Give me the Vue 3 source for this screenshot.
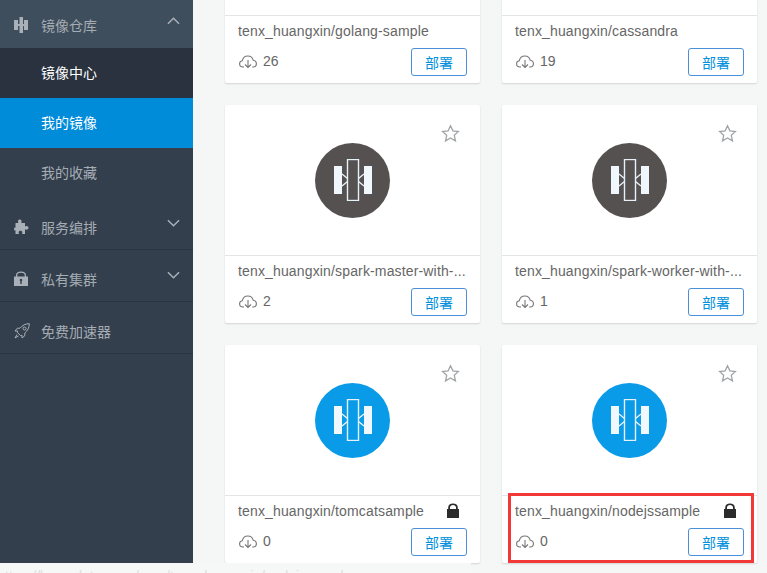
<template>
  <div class="page">
    <aside class="sidebar">
      <div class="menu-head">
        <svg class="menu-icon" viewBox="0 0 16 16"><path d="M0 3h4v4h1.500V0H9v7h1V3h4v10h-4V9H9v7H5.500V9H4v4H0z" /></svg>
        <span>镜像仓库</span>
        <svg class="chevron" viewBox="0 0 14 8"><path d="M1 7l6-6 6 6" /></svg>
      </div>
      <div class="sub-item current">镜像中心</div>
      <div class="sub-item active">我的镜像</div>
      <div class="sub-item">我的收藏</div>

      <div v-for="item in menus" :key="item.name" class="menu-item">
        <svg v-if="item.icon === 'puzzle'" class="menu-icon" viewBox="0 0 16 16"><path d="M4 2.500C4 1.200 5 .6 5.800.6S7.600 1.200 7.600 2.500c0 .6-.3 1-.3 1.500H11v3.300c.5 0 .9-.4 1.600-.4 1.200 0 1.900 1 1.900 1.900s-.7 1.900-1.900 1.900c-.7 0-1.100-.4-1.600-.4V15H8c0-.6.4-1 .4-1.600 0-1-.9-1.600-1.900-1.600s-1.900.6-1.900 1.600c0 .6.4 1 .4 1.600H1.500v-3.700c-.6 0-.8.300-1.200.300L0 8.500c.3 0 .7.300 1.500.300V4h2.800c0-.5-.3-.9-.3-1.500z" /></svg>
        <svg v-else-if="item.icon === 'lock'" class="menu-icon" viewBox="0 0 16 16"><path fill-rule="evenodd" d="M0 5.500h2V4C2 2 4 .5 7 .5S12 2 12 4v1.500h2V15H0zM3.300 5.500h7.400V4c0-1.400-1.600-2.300-3.700-2.300S3.300 2.600 3.300 4zM7 7.800a1.300 1.300 0 0 0-.7 2.400V13h1.400v-2.800A1.300 1.300 0 0 0 7 7.800z" /></svg>
        <svg v-else class="menu-icon rocket" viewBox="0 0 16 16"><path d="M15.300.7C11.500.7 8.300 2.300 6 5.200H3.300L1 8h2.700L3.300 9.400l3.300 3.300 1.400-.4v2.700l2.800-2.300V10c2.900-2.300 4.500-5.500 4.500-9.300z" /><circle cx="10.500" cy="5.500" r="1.500" /><path d="M3 11.500L1 15l3.500-2" /></svg>
        <span>{{ item.name }}</span>
        <svg v-if="item.arrow" class="chevron" viewBox="0 0 14 8"><path d="M1 1l6 6 6-6" /></svg>
      </div>
    </aside>

    <main class="content">
      <div class="grid">
        <div v-for="card in cards" :key="card.name" class="card">
          <div class="card-top">
            <svg class="star" viewBox="0 0 20 20"><path d="M10 1.800l2.500 5.400 5.800.7-4.300 4 1.200 5.800-5.200-3-5.200 3 1.200-5.800-4.300-4 5.800-.7z" /></svg>
            <div class="logo" :class="card.color">
              <svg viewBox="-21 -21 42 42" width="42" height="42">
                <path class="logo-fill" d="M-19-14h8v28h-8zM11-14h8v28h-8z" />
                <rect class="logo-line" x="-5.500" y="-20.500" width="11" height="41" />
                <path class="logo-line" d="M-11-6l5.500 4.500M-11 6l5.500-4.500M11-6L5.500-1.500M11 6L5.500 1.500" />
              </svg>
            </div>
          </div>
          <div class="name-row">
            <span class="name">{{ card.name }}</span>
            <svg v-if="card.locked" class="lock" viewBox="0 0 14 15"><path fill-rule="evenodd" d="M1 6h1.200V4.500C2.200 2 4.200.5 7 .5s4.800 1.500 4.800 4V6H13v9H1zM4 6h6V4.500C10 3 8.700 2.100 7 2.100S4 3 4 4.500z" /></svg>
          </div>
          <div class="action-row">
            <div class="pulls">
              <svg class="cloud" viewBox="0 0 18 13"><path d="M5 12H4C2 12 .6 10.600.6 8.800.6 7.200 1.800 5.900 3.300 5.700 3.800 3 6 1 8.800 1c2.700 0 4.900 1.800 5.400 4.300 1.800.2 3.200 1.700 3.200 3.500 0 1.800-1.500 3.200-3.300 3.200h-.9" /><path d="M9 5v7.500M6 9.500l3 3 3-3" /></svg>
              <span class="count">{{ card.count }}</span>
            </div>
            <button class="deploy" type="button">部署</button>
          </div>
          <div v-if="card.marked" class="mark"></div>
        </div>
      </div>
    </main>

    <div class="strip"><span>tten://hosp.dotenx.cn/user/tenx_huangxin/nodejssample</span></div>
  </div>
</template>

<script setup>
const menus = [
  { name: '服务编排', icon: 'puzzle', arrow: true },
  { name: '私有集群', icon: 'lock', arrow: true },
  { name: '免费加速器', icon: 'rocket', arrow: false },
]

const cards = [
  { name: 'tenx_huangxin/golang-sample', count: 26, color: 'blue' },
  { name: 'tenx_huangxin/cassandra', count: 19, color: 'blue' },
  { name: 'tenx_huangxin/spark-master-with-...', count: 2, color: 'dark' },
  { name: 'tenx_huangxin/spark-worker-with-...', count: 1, color: 'dark' },
  { name: 'tenx_huangxin/tomcatsample', count: 0, color: 'blue', locked: true },
  { name: 'tenx_huangxin/nodejssample', count: 0, color: 'blue', locked: true, marked: true },
]
</script>

<style>
html,
body {
  margin: 0;
  overflow: hidden;
}
</style>

<style scoped>
.page {
  position: relative;
  display: flex;
  width: 767px;
  height: 573px;
  overflow: hidden;
  background: #f5f6f6;
  font-family: "Liberation Sans", "Noto Sans CJK SC", sans-serif;
}

.sidebar {
  flex: none;
  width: 193px;
  background: #333f4d;
  color: #a5acb3;
  font-size: 14px;
}

.menu-head {
  display: flex;
  align-items: center;
  height: 48px;
  padding: 2px 14px 0;
  box-sizing: border-box;
  background: #3f4e5c;
}

.menu-item {
  display: flex;
  align-items: center;
  height: 52px;
  padding: 6px 14px 0;
  box-sizing: border-box;
  border-bottom: 1px solid #2a3542;
}

.menu-icon {
  flex: none;
  width: 16px;
  height: 16px;
  margin-right: 11px;
  fill: #a9b0b7;
}

.menu-icon.rocket {
  fill: none;
  stroke: #a9b0b7;
  stroke-width: 1;
}

.chevron {
  width: 13px;
  height: 8px;
  margin-left: auto;
  margin-right: -1px;
  margin-top: -8px;
  fill: none;
  stroke: #a9b0b7;
  stroke-width: 1.6;
}

.sub-item {
  height: 50px;
  line-height: 51px;
  padding-left: 41px;
}

.sub-item.current {
  background: #29323e;
  color: #fff;
}

.sub-item.active {
  background: #008cd9;
  color: #fff;
}

.content {
  flex: 1;
  min-width: 0;
}

.grid {
  display: grid;
  grid-template-columns: 255px 255px;
  grid-auto-rows: 218px;
  column-gap: 22px;
  row-gap: 22px;
  margin: -135px 0 0 32px;
}

.card {
  position: relative;
  background: #fff;
  border-radius: 2px;
  box-shadow: 0 1px 2px rgba(0, 0, 0, 0.14);
}

.card-top {
  position: relative;
  display: flex;
  align-items: center;
  justify-content: center;
  height: 151px;
  box-sizing: border-box;
  border-bottom: 1px solid #e4e6e6;
}

.star {
  position: absolute;
  top: 19px;
  right: 20px;
  width: 19px;
  height: 19px;
  fill: #fff;
  stroke: #a3a6a8;
  stroke-width: 1.4;
}

.logo {
  display: flex;
  align-items: center;
  justify-content: center;
  width: 75px;
  height: 75px;
  border-radius: 50%;
}

.logo.blue {
  background: #0a9be8;
}

.logo.dark {
  background: #555150;
}

.logo-fill {
  fill: #f1f8fd;
}

.logo-line {
  fill: none;
  stroke: #e6f1f8;
  stroke-width: 1.4;
}

.name-row {
  display: flex;
  align-items: center;
  height: 29px;
  padding: 0 13px 2px;
}

.name {
  flex: 1;
  min-width: 0;
  color: #666;
  font-size: 14px;
  letter-spacing: 0.15px;
  white-space: nowrap;
}

.lock {
  flex: none;
  width: 14px;
  height: 15px;
  margin: 0 7px 0 8px;
  fill: #2b2b2b;
}

.action-row {
  display: flex;
  align-items: center;
  height: 28px;
  padding: 0 13px 0 14px;
  margin-top: 1px;
}

.pulls {
  display: flex;
  align-items: center;
  padding-bottom: 2px;
}

.cloud {
  flex: none;
  width: 18px;
  height: 13px;
  fill: none;
  stroke: #777;
  stroke-width: 1.1;
}

.count {
  margin-left: 6px;
  color: #666;
  font-size: 14px;
}

.deploy {
  width: 56px;
  height: 28px;
  margin-left: auto;
  padding: 0;
  border: 1px solid #4a90d9;
  border-radius: 3px;
  background: #fff;
  color: #0090dd;
  font-family: inherit;
  font-size: 14px;
}

.mark {
  position: absolute;
  left: 6px;
  right: 3px;
  top: 148px;
  bottom: 0;
  border: 3px solid #f33838;
}

.strip {
  position: absolute;
  left: 0;
  bottom: 0;
  width: 471px;
  height: 10px;
  overflow: hidden;
  background: #f6f7f7;
  color: #dcdede;
  font-size: 14px;
  line-height: 14px;
  padding: 6px 0 0 5px;
  box-sizing: border-box;
}
</style>
